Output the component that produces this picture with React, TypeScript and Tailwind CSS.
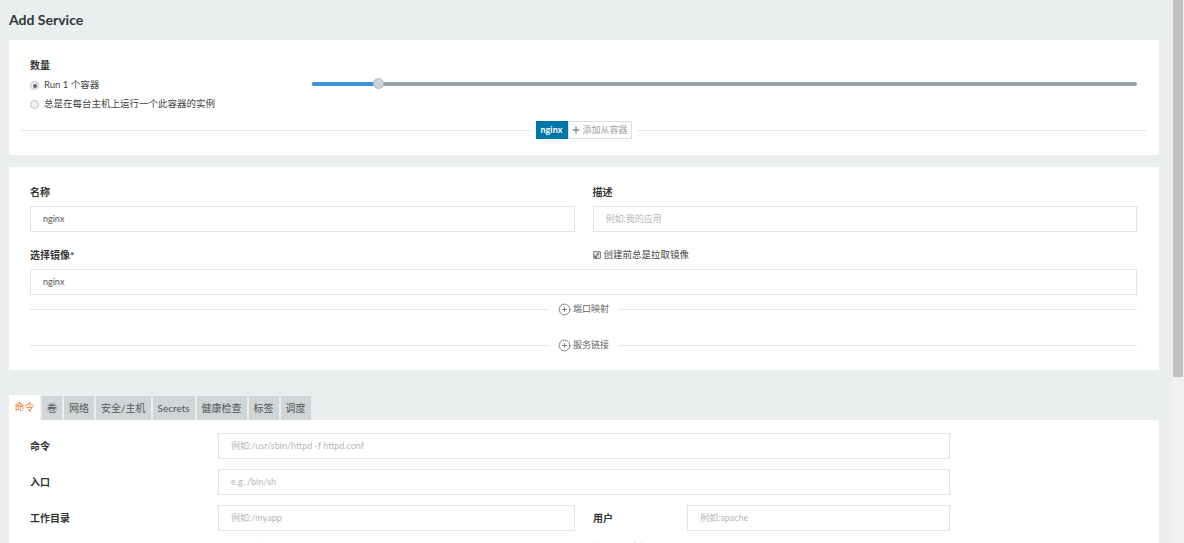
import { Plus, CirclePlus } from "lucide-react";

const FONT = { fontFamily: "Lato, 'Noto Sans CJK SC', 'Noto Sans', sans-serif" };

const TABS = ["命令", "卷", "网络", "安全/主机", "Secrets", "健康检查", "标签", "调度"];

function Radio({ checked }: { checked?: boolean }) {
  return (
    <span className="grid h-[9px] w-[9px] place-items-center rounded-full border border-[#bfc4c7] bg-[#eef0f1]">
      {checked && <span className="h-[4px] w-[4px] rounded-full bg-[#666]" />}
    </span>
  );
}

function Input({ value, placeholder, className = "" }: { value?: string; placeholder?: string; className?: string }) {
  return (
    <div
      className={
        "flex h-[26px] items-center border border-[#e2e4e5] bg-white px-[12px] text-[9px] " +
        (value ? "text-[#555]" : "text-[#b5b8ba]") +
        " " +
        className
      }
    >
      {value ?? placeholder}
    </div>
  );
}

function AddDivider({ label }: { label: string }) {
  return (
    <div className="flex h-[14px] items-center">
      <div className="h-px flex-1 bg-[#e3e5e6]" />
      <div className="mx-[9px] flex items-center gap-[2px] text-[9px] text-[#666]">
        <CirclePlus size={13} strokeWidth={1.3} className="text-[#555]" />
        {label}
      </div>
      <div className="h-px flex-1 bg-[#e3e5e6]" />
    </div>
  );
}

export default function App() {
  return (
    <div className="flex h-[543px] w-[1184px] overflow-hidden bg-[#ebeeef]" style={FONT}>
      <main className="flex-1 pl-[9px] pr-[13px]">
        {/* header */}
        <div className="flex h-[40px] items-center pb-[1px]">
          <h1 className="text-[14px] font-bold text-[#2f3538]">Add Service</h1>
        </div>

        {/* 数量 */}
        <section className="h-[115px] bg-white">
          <div className="flex pl-[21px] pr-[22px] pt-[18px]">
            <div className="w-[282px]">
              <div className="h-[14px] text-[10px] font-bold leading-[14px] text-[#333]">数量</div>
              <div className="mt-[4px] flex h-[19px] items-center gap-[5px] text-[9.5px] text-[#444]">
                <Radio checked />
                Run 1 个容器
              </div>
              <div className="flex h-[19px] items-center gap-[5px] text-[9.5px] text-[#444]">
                <Radio />
                总是在每台主机上运行一个此容器的实例
              </div>
            </div>
            <div className="flex-1 pt-[24px]">
              <div className="relative h-[4px] rounded-full bg-[#9aa2a7]">
                <div className="absolute left-0 top-0 h-[4px] w-[67px] rounded-l-full bg-[#3d95d8]" />
                <div className="absolute left-[61px] top-[-4px] h-[11px] w-[11px] rounded-full border border-[#b3babe] bg-[#cdd2d5]" />
              </div>
            </div>
          </div>
          <div className="mt-[7px] flex h-[18px] items-center pl-[12px] pr-[13px]">
            <div className="h-px flex-1 bg-[#e3e5e6]" />
            <div className="mx-[6px] flex h-[18px]">
              <div className="flex w-[32px] items-center justify-center bg-[#0075a8] text-[9px] font-bold text-white">nginx</div>
              <div className="flex w-[64px] items-center justify-center gap-[1px] border border-[#dcdfe0] text-[9px] text-[#9a9ea1]">
                <Plus size={10} strokeWidth={3.5} className="text-[#8a8f92]" />
                添加从容器
              </div>
            </div>
            <div className="h-px flex-1 bg-[#e3e5e6]" />
          </div>
        </section>

        {/* 名称 / 镜像 */}
        <section className="mt-[12px] h-[203px] bg-white pl-[21px] pr-[22px] pt-[18px]">
          <div className="grid grid-cols-2 gap-x-[18px]">
            <div>
              <div className="h-[14px] text-[10px] font-bold leading-[14px] text-[#333]">名称</div>
              <Input value="nginx" className="mt-[7px]" />
            </div>
            <div>
              <div className="h-[14px] text-[10px] font-bold leading-[14px] text-[#333]">描述</div>
              <Input placeholder="例如:我的应用" className="mt-[7px]" />
            </div>
            <div className="mt-[16px] h-[14px] text-[10px] font-bold leading-[14px] text-[#333]">选择镜像*</div>
            <div className="mt-[16px] flex h-[14px] items-center gap-[3px] text-[9.5px] text-[#444]">
              <span className="grid h-[8px] w-[8px] place-items-center rounded-[1px] border border-[#888] bg-[#ddd] text-[7px] font-bold leading-none text-[#222]">✓</span>
              创建前总是拉取镜像
            </div>
          </div>
          <Input value="nginx" className="mt-[7px]" />
          <div className="mt-[7px]">
            <AddDivider label="端口映射" />
          </div>
          <div className="mt-[22px]">
            <AddDivider label="服务链接" />
          </div>
        </section>

        {/* tabs */}
        <div className="mt-[25px] flex h-[25px] items-end gap-[2px]">
          {TABS.map((t, i) =>
            i === 0 ? (
              <div key={t} className="flex h-[25px] w-[31px] items-center justify-center bg-white text-[10px] text-[#f47b2a]">
                {t}
              </div>
            ) : (
              <div key={t} className="flex h-[24px] items-center bg-[#d0d5d7] px-[5px] text-[10px] text-[#555]">
                {t}
              </div>
            ),
          )}
        </div>

        {/* 命令 */}
        <section className="h-[200px] bg-white pl-[21px] pt-[13px]">
          <div className="flex flex-col gap-[10px]">
            <div className="flex items-center">
              <div className="w-[188px] text-[10px] font-bold text-[#333]">命令</div>
              <Input placeholder="例如:/usr/sbin/httpd -f httpd.conf" className="w-[732px]" />
            </div>
            <div className="flex items-center">
              <div className="w-[188px] text-[10px] font-bold text-[#333]">入口</div>
              <Input placeholder="e.g. /bin/sh" className="w-[732px]" />
            </div>
            <div className="flex items-center">
              <div className="w-[188px] text-[10px] font-bold text-[#333]">工作目录</div>
              <Input placeholder="例如:/myapp" className="w-[357px]" />
              <div className="ml-[18px] w-[94px] text-[10px] font-bold text-[#333]">用户</div>
              <Input placeholder="例如:apache" className="w-[263px]" />
            </div>
            <div className="flex items-start text-[9px] text-[#666]">
              <div className="w-[188px]" />
              <div className="flex w-[357px] items-center gap-[4px]">
                <Radio checked /> 无 <Radio /> 交互 &amp; TTY (-i -t)
              </div>
              <div className="ml-[18px] flex items-center gap-[4px] font-bold text-[#333]">
                自动 <Radio /> 重启
              </div>
            </div>
          </div>
        </section>
      </main>

      {/* scrollbar */}
      <div className="w-[12px] bg-[#f1f1f1]">
        <div className="ml-[1px] h-[377px] w-[10px] bg-[#c1c1c1]" />
      </div>
    </div>
  );
}
